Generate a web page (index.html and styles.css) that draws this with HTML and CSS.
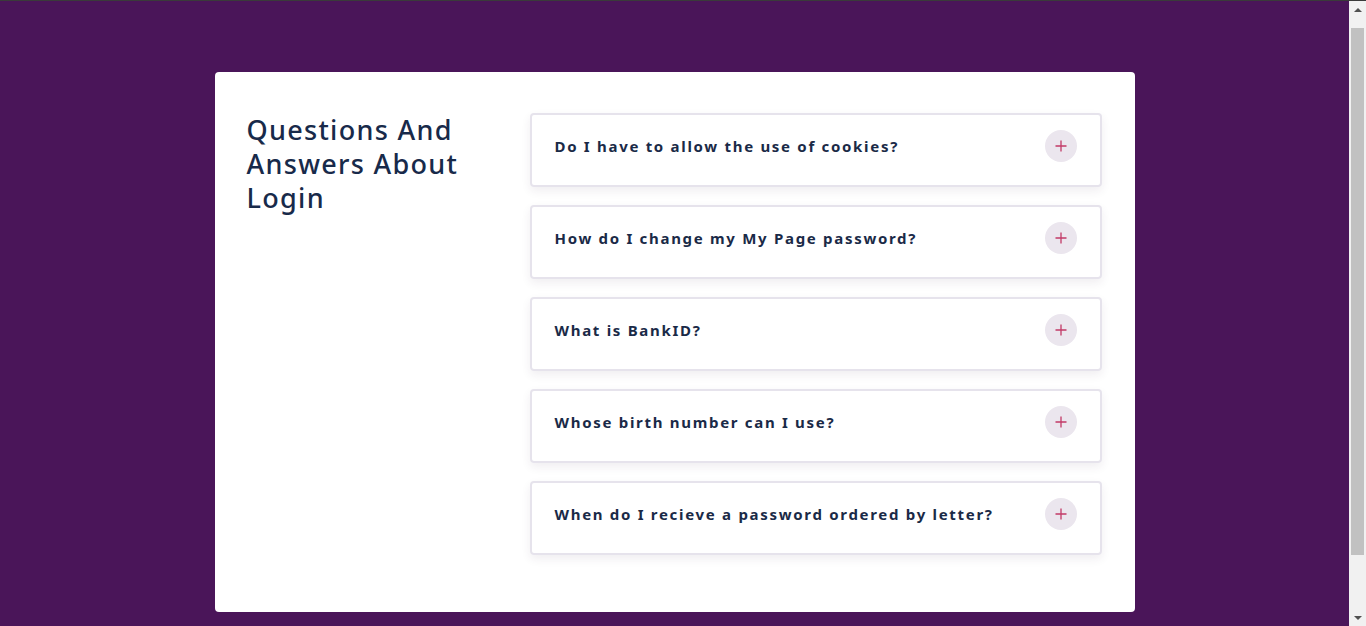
FILE: index.html
```html
<!DOCTYPE html>
<html lang="en">
<head>
<meta charset="utf-8">
<title>FAQ</title>
<link rel="stylesheet" href="styles.css">
</head>
<body>
<main class="card">
  <h1 class="title">Questions And Answers About Login</h1>
  <div class="faq">
    <div class="item"><span class="q">Do I have to allow the use of cookies?</span><span class="btn"><svg width="12" height="12" viewBox="0 0 12 12"><path d="M6 0.5v11M0.5 6h11" stroke="#c23a67" stroke-width="1.3" fill="none"/></svg></span></div>
    <div class="item"><span class="q">How do I change my My Page password?</span><span class="btn"><svg width="12" height="12" viewBox="0 0 12 12"><path d="M6 0.5v11M0.5 6h11" stroke="#c23a67" stroke-width="1.3" fill="none"/></svg></span></div>
    <div class="item"><span class="q">What is BankID?</span><span class="btn"><svg width="12" height="12" viewBox="0 0 12 12"><path d="M6 0.5v11M0.5 6h11" stroke="#c23a67" stroke-width="1.3" fill="none"/></svg></span></div>
    <div class="item"><span class="q">Whose birth number can I use?</span><span class="btn"><svg width="12" height="12" viewBox="0 0 12 12"><path d="M6 0.5v11M0.5 6h11" stroke="#c23a67" stroke-width="1.3" fill="none"/></svg></span></div>
    <div class="item"><span class="q">When do I recieve a password ordered by letter?</span><span class="btn"><svg width="12" height="12" viewBox="0 0 12 12"><path d="M6 0.5v11M0.5 6h11" stroke="#c23a67" stroke-width="1.3" fill="none"/></svg></span></div>
  </div>
</main>
<div class="scrollbar" aria-hidden="true">
  <span class="arrow up"></span>
  <span class="track"><span class="thumb"></span></span>
  <span class="arrow down"></span>
</div>
</body>
</html>
```
FILE: styles.css
```css
html {
  background: #4a1559;
  border-top: 1px solid #3a3a3a;
}
body {
  margin: 0 17px 0 0;
  padding: 71px 0 90px;
  font-family: "Noto Sans", "Open Sans", sans-serif;
  background: #4a1559;
}
.card {
  width: 920px;
  margin: 0 auto;
  box-sizing: border-box;
  background: #fff;
  border-radius: 4px;
  padding: 41px 33px 57px 32px;
  display: grid;
  grid-template-columns: 283px 1fr;
}
.title {
  margin: 0;
  font-size: 27px;
  line-height: 34px;
  font-weight: 500;
  letter-spacing: 1.3px;
  color: #182a4a;
  max-width: 240px;
}
.faq {
  display: flex;
  flex-direction: column;
  gap: 18px;
}
.item {
  height: 74px;
  box-sizing: border-box;
  border: 2px solid #e6e3ec;
  border-radius: 4px;
  box-shadow: 0 4px 10px rgba(60, 40, 80, 0.08);
  display: flex;
  align-items: center;
  justify-content: space-between;
  padding: 0 23px 8px 23px;
}
.q {
  font-size: 15px;
  font-weight: 700;
  letter-spacing: 1.7px;
  color: #1a2a47;
}
.btn {
  width: 32px;
  height: 32px;
  border-radius: 50%;
  background: #ebe6ee;
  display: flex;
  align-items: center;
  justify-content: center;
}
.scrollbar {
  position: fixed;
  top: 1px;
  right: 0;
  bottom: 0;
  width: 17px;
  background: #f1f1f1;
  display: flex;
  flex-direction: column;
  align-items: center;
}
.arrow {
  height: 17px;
  width: 17px;
  display: flex;
  align-items: center;
  justify-content: center;
}
.arrow::before {
  content: "";
  border-left: 4px solid transparent;
  border-right: 4px solid transparent;
}
.arrow.up::before {
  border-bottom: 4px solid #505050;
}
.arrow.down::before {
  border-top: 4px solid #505050;
}
.track {
  flex: 1;
  width: 100%;
  display: flex;
  justify-content: center;
  padding-top: 10px;
}
.thumb {
  width: 13px;
  height: 527px;
  background: #c1c1c1;
}
```
